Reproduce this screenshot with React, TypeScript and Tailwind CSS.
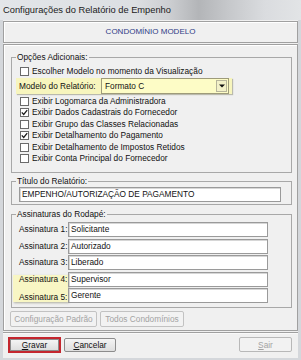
import React from "react";

function Check({ checked }: { checked?: boolean }) {
  return (
    <span className="w-[9px] h-[9px] border border-[#6a6a6a] bg-white flex items-center justify-center shrink-0">
      {checked && (
        <svg width="7" height="7" viewBox="0 0 7 7">
          <path d="M0.8 3.4 L2.7 5.4 L6.2 1.2" stroke="#1c1c1c" strokeWidth="1.3" fill="none" />
        </svg>
      )}
    </span>
  );
}

function CheckRow({ label, checked }: { label: string; checked?: boolean }) {
  return (
    <div className="flex items-center h-[11.5px] pl-[4px] gap-[3px] whitespace-nowrap">
      <Check checked={checked} />
      <span className="leading-[11px]">{label}</span>
    </div>
  );
}

function TextBox({ value, className }: { value: string; className?: string }) {
  return (
    <div
      className={
        "h-[15px] border border-[#9a9a9a] shadow-[inset_1px_1px_0_#d6d6d6] bg-white pl-[2px] flex items-center leading-[13px] whitespace-nowrap overflow-hidden " +
        (className ?? "")
      }
    >
      {value}
    </div>
  );
}

function SigRow({ n, value }: { n: number; value: string }) {
  return (
    <div className="flex items-center h-[15px]">
      <span className="w-[52px] pl-[3px] leading-[15px] whitespace-nowrap">Assinatura {n}:</span>
      <TextBox value={value} className="w-[200px]" />
    </div>
  );
}

export default function App() {
  return (
    <div className="w-[301px] h-[360px] bg-[#d4d7db] font-['Liberation_Sans',Arial,sans-serif] text-[8.3px] text-[#111] flex flex-col overflow-hidden">
      {/* Title bar */}
      <div className="h-[20px] shrink-0 flex items-center pl-[3px] bg-[linear-gradient(90deg,#e3e6e9_0%,#dcdfe2_45%,#cdcfd2_56%,#b3b5b8_66%,#c6c8cb_76%,#dadcdf_88%,#e2e4e6_100%)] text-[9.3px] text-[#1b1b1b] leading-[12px]">
        Configurações do Relatório de Empenho
      </div>

      {/* Client area */}
      <div className="mx-[3px] flex-1 bg-[#f0f0f0] flex flex-col mb-[2px]">
        {/* Header */}
        <div className="mt-[1px] h-[22px] border border-[#a0a0a0] shadow-[inset_1px_1px_0_#ffffff] flex items-center justify-center text-[8px] text-[#2f3b86] leading-[10px]">
          CONDOMÍNIO MODELO
        </div>

        {/* Main panel */}
        <div className="mt-[1px] border border-[#a0a0a0] shadow-[inset_1px_1px_0_#ffffff] pl-[7px] pr-[5px] pt-[7px] pb-[3px] flex flex-col">
          {/* Group 1 */}
          <fieldset className="border border-[#a8a8a8] pl-[4px] pr-[4px] pt-[4px] pb-[7.5px]">
            <legend className="px-[1px] leading-[10px]">Opções Adicionais:</legend>
            <CheckRow label="Escolher Modelo no momento da Visualização" />
            <div className="mt-[0.5px] h-[16px] w-[216px] bg-[#f7f5bd] shadow-[1px_1px_1px_rgba(120,120,90,0.45)] flex items-center pr-[3px]">
              <span className="w-[85px] pl-[3px] whitespace-nowrap leading-[12px]">Modelo do Relatório:</span>
              <div className="w-[128px] h-[16px] border border-[#9e9b7a] bg-[#fdfcc6] flex items-center">
                <span className="flex-1 pl-[3px] leading-[12px]">Formato C</span>
                <span className="w-[11px] h-[12px] mr-[1px] border border-[#b7b59a] bg-[#f3f1c8] flex items-center justify-center">
                  <svg width="6" height="4" viewBox="0 0 6 4">
                    <path d="M0 0.5 L6 0.5 L3 3.5 Z" fill="#111" />
                  </svg>
                </span>
              </div>
            </div>
            <div className="mt-[1.5px] flex flex-col">
              <CheckRow label="Exibir Logomarca da Administradora" />
              <CheckRow label="Exibir Dados Cadastrais do Fornecedor" checked />
              <CheckRow label="Exibir Grupo das Classes Relacionadas" />
              <CheckRow label="Exibir Detalhamento do Pagamento" checked />
              <CheckRow label="Exibir Detalhamento de Impostos Retidos" />
              <CheckRow label="Exibir Conta Principal do Fornecedor" />
            </div>
          </fieldset>

          {/* Group 2 */}
          <fieldset className="mt-[3px] border border-[#a8a8a8] pl-[4px] pr-[4px] pt-[1px] pb-[2px]">
            <legend className="px-[1px] leading-[10px]">Título do Relatório:</legend>
            <TextBox value="EMPENHO/AUTORIZAÇÃO DE PAGAMENTO" className="ml-[3px] w-[262px]" />
          </fieldset>

          {/* Group 3 */}
          <fieldset className="mt-[4px] border border-[#a8a8a8] pl-[4px] pr-[4px] pt-[3px] pb-[4px]">
            <legend className="px-[1px] leading-[10px]">Assinaturas do Rodapé:</legend>
            <div className="flex flex-col gap-[1.5px]">
              <SigRow n={1} value="Solicitante" />
              <SigRow n={2} value="Autorizado" />
              <SigRow n={3} value="Liberado" />
              <div className="flex">
                <div className="w-[52px] flex">
                  <div className="-ml-[3px] mt-[3px] h-[27px] w-[55px] bg-[#f8f6c4] shadow-[1px_1px_2px_rgba(110,110,80,0.5)] flex flex-col justify-between pl-[6px] whitespace-nowrap">
                    <span className="leading-[9px]">Assinatura 4:</span>
                    <span className="leading-[9px]">Assinatura 5:</span>
                  </div>
                </div>
                <div className="flex flex-col gap-[1px]">
                  <TextBox value="Supervisor" className="w-[200px]" />
                  <TextBox value="Gerente" className="w-[200px]" />
                </div>
              </div>
            </div>
          </fieldset>

          {/* Buttons in panel */}
          <div className="mt-[3px] -ml-[1px] flex gap-[3px]">
            <div className="w-[87px] h-[16px] border border-[#c2c2c2] rounded-[2px] bg-[#f2f2f2] flex items-center justify-center text-[#a3a3a3] leading-[12px] whitespace-nowrap">
              Configuração Padrão
            </div>
            <div className="w-[84px] h-[16px] border border-[#c2c2c2] rounded-[2px] bg-[#f2f2f2] flex items-center justify-center text-[#a3a3a3] leading-[12px] whitespace-nowrap">
              Todos Condomínios
            </div>
          </div>
        </div>

        {/* Separator */}
        <div className="mt-[1px] h-[2px] border-t border-[#a0a0a0] bg-[#ffffff]/60" />

        {/* Bottom buttons */}
        <div className="mt-[3px] pl-[5px] pr-[6px] flex items-center">
          <div className="w-[53px] h-[16px] border-[2px] border-[#c4262e] flex">
            <div className="flex-1 border border-[#8c8c8c] bg-[linear-gradient(#f4f4f4,#dedede)] flex items-center justify-center leading-[10px]">
              <span><span className="underline">G</span>ravar</span>
            </div>
          </div>
          <div className="ml-[3px] w-[52px] h-[14px] border border-[#8c8c8c] rounded-[2px] bg-[linear-gradient(#f4f4f4,#dedede)] flex items-center justify-center leading-[10px]">
            <span><span className="underline">C</span>ancelar</span>
          </div>
          <div className="ml-auto w-[53px] h-[15px] border border-[#b8b8b8] rounded-[2px] bg-[#f2f2f2] flex items-center justify-center text-[#a3a3a3] leading-[10px]">
            <span><span className="underline">S</span>air</span>
          </div>
        </div>
      </div>
    </div>
  );
}
